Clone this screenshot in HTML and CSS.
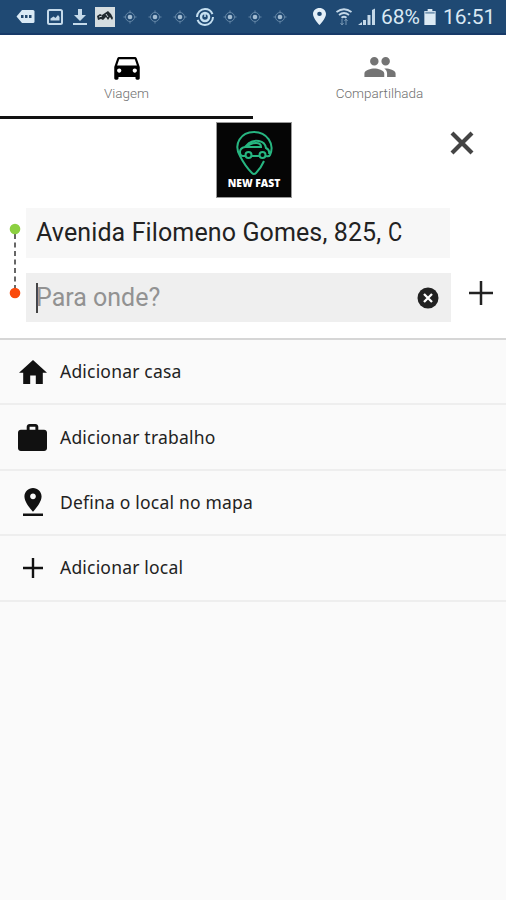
FILE: index.html
```html
<!DOCTYPE html>
<html lang="pt-BR">

<head>
    <meta charset="UTF-8">
    <meta name="viewport" content="width=device-width, initial-scale=1.0">
    <title>New Fast</title>
    <link rel="stylesheet" href="styles.css">
</head>

<body>
    <!-- icon reused by the location notifications -->
    <svg class="defs">
        <symbol id="gps" viewBox="0 0 16 16">
            <circle cx="8" cy="8" r="4.500" fill="none" stroke="#6486a6" />
            <circle cx="8" cy="8" r="2.300" fill="#a4bdd2" />
            <path d="M8 1.500v2M8 12.500v2M1.500 8h2M12.500 8h2" stroke="#6486a6" />
        </symbol>
    </svg>

    <div class="status-bar">
        <div class="notifications">
            <span class="first"><svg width="19" height="15" viewBox="0 0 19 15"><path d="M6 1h11q1.500 0 1.500 1.500v10q0 1.500-1.500 1.500H6L.5 7.500z" fill="#d9e9f5" /><path d="M5 6h2.500v3H5zM9 6h2.500v3H9zM13 6h2.500v3H13z" fill="#22486e" /></svg></span>
            <span><svg width="18" height="18" viewBox="0 0 18 18"><rect x="2" y="2" width="14" height="14" rx="1.500" fill="none" stroke="#c5daea" stroke-width="2" /><path d="M4.500 12.500v-2l3-2 2 1.500 2.500-3 1.500 2v3.500z" fill="#c5daea" /></svg></span>
            <span><svg width="16" height="18" viewBox="0 0 16 18"><path d="M6 1h4v6h4l-6 6-6-6h4zM1 15h14v2H1z" fill="#c5daea" /></svg></span>
            <span><svg width="20" height="20" viewBox="0 0 20 20"><rect width="20" height="20" fill="#d5dde0" /><path d="M2 9l3-2 2 1 3-2 3-2 3 3 2 4-1 2-2-3-2 3-2-3-3 3-2-1-3 1z" fill="#202a30" /><path d="M4 10l3-1M11 7l2 3" stroke="#cbd5da" /></svg></span>
            <span><svg width="16" height="16"><use href="#gps" /></svg></span>
            <span><svg width="16" height="16"><use href="#gps" /></svg></span>
            <span><svg width="16" height="16"><use href="#gps" /></svg></span>
            <span><svg width="20" height="20" viewBox="0 0 20 20" fill="none" stroke="#c5dff0"><circle cx="10" cy="10" r="8" stroke-width="2" stroke-dasharray="22 3" /><circle cx="10" cy="10" r="4" stroke-width="2.500" /><path d="M10 10V6" stroke-width="1.500" /></svg></span>
            <span><svg width="16" height="16"><use href="#gps" /></svg></span>
            <span><svg width="16" height="16"><use href="#gps" /></svg></span>
            <span><svg width="16" height="16"><use href="#gps" /></svg></span>
        </div>
        <div class="system">
            <svg width="13" height="17" viewBox="5 2 14 20" preserveAspectRatio="none"><path d="M12 2C8.130 2 5 5.130 5 9c0 5.250 7 13 7 13s7-7.750 7-13c0-3.870-3.130-7-7-7zm0 9.500a2.500 2.500 0 1 1 0-5 2.500 2.500 0 0 1 0 5z" fill="#e4eff8" /></svg>
            <svg class="wifi" width="18" height="18" viewBox="0 0 18 18" fill="none" stroke="#c4d8e8"><path d="M1.500 4q7.500-5.500 15 0M4 7q5-4 10 0M6.500 9.700q2.500-2 5 0" stroke-width="1.800" /><path d="M7 11v6M11 11v6M5.500 15L7 17l1.500-2M9.500 13l1.500-2 1.500 2" stroke="#7898b5" /></svg>
            <svg class="signal" width="18" height="18" viewBox="0 0 18 18" fill="#c4d8e8"><path d="M0 17l4-3v3zM5 12h3v5H5zM9.500 7h3v10h-3zM14 2l3-1.500V17h-3z" /></svg>
            <span class="percent">68%</span>
            <svg class="battery" width="12" height="16" viewBox="0 0 12 17"><path d="M3.500 0h5v2H12v15H0V2h3.500z" fill="#dceaf4" /><path d="M1 3h10v2H1z" fill="#7898b5" /></svg>
            <span class="clock">16:51</span>
        </div>
    </div>

    <div class="tabs">
        <div class="tab active">
            <svg width="34" height="34" viewBox="0 0 24 24"><path d="M18.920 6.010C18.720 5.420 18.160 5 17.500 5h-11c-.66 0-1.210.42-1.420 1.010L3 12v8c0 .55.45 1 1 1h1c.55 0 1-.45 1-1v-1h12v1c0 .55.45 1 1 1h1c.55 0 1-.45 1-1v-8l-2.080-5.990zM6.500 16c-.83 0-1.500-.67-1.500-1.500S5.670 13 6.500 13s1.500.67 1.500 1.500S7.330 16 6.500 16zm11 0c-.83 0-1.500-.67-1.500-1.500s.67-1.500 1.500-1.500 1.500.67 1.500 1.500-.67 1.500-1.500 1.500zM5 11l1.500-4.500h11L19 11H5z" /></svg>
            <span class="tab-label">Viagem</span>
        </div>
        <div class="tab">
            <svg width="34" height="34" viewBox="0 0 24 24" fill="#747474"><path d="M16 11c1.660 0 2.990-1.340 2.990-3S17.660 5 16 5s-3 1.340-3 3 1.340 3 3 3zm-8 0c1.660 0 2.990-1.340 2.990-3S9.660 5 8 5 5 6.340 5 8s1.340 3 3 3zm0 2c-2.330 0-7 1.170-7 3.500V19h14v-2.500c0-2.330-4.670-3.500-7-3.500zm8 0c-.29 0-.62.02-.97.05 1.160.84 1.970 1.970 1.970 3.450V19h6v-2.500c0-2.330-4.670-3.500-7-3.500z" /></svg>
            <span class="tab-label">Compartilhada</span>
        </div>
    </div>

    <div class="header">
        <div class="logo">
            <svg width="38" height="46" viewBox="0 0 38 46" fill="none" stroke="#27b681" stroke-width="2">
                <path d="M5 26C-2 14 6 2 19 2s21 12 16 23q-1 2-4 1M5 26q5 10 12 17 2 2 4 0 5-5 8-12" />
                <path d="M10 26H8q-3 0-3-4 0-4 5-5l4-4q4-3 10-2 6 1 7 7 4 2 3 6M17 26h7M12 17h14q0-4-5-4-6 0-9 4z" />
                <circle cx="13.500" cy="25" r="3" />
                <circle cx="27.500" cy="25" r="3" />
            </svg>
            <span>NEW FAST</span>
        </div>
        <svg class="close" width="26" height="26" viewBox="0 0 26 26"><path d="M3 3l20 20M23 3L3 23" stroke="#444" stroke-width="4.200" /></svg>
    </div>

    <div class="route">
        <svg class="track" width="12" height="76" viewBox="0 0 12 76">
            <path d="M6 11v54" stroke="#666" stroke-width="2" stroke-dasharray="5 3.500" />
            <circle cx="6" cy="6" r="5.300" fill="#8cd041" />
            <circle cx="6" cy="70" r="5.300" fill="#fa4a0c" />
        </svg>
        <div class="fields">
            <div class="field origin">Avenida Filomeno Gomes, 825, <span class="last">C</span></div>
            <div class="field destination">
                <span class="caret"></span>
                <span class="placeholder">Para onde?</span>
                <svg width="22" height="22" viewBox="0 0 22 22"><circle cx="11" cy="11" r="10.500" fill="#222" /><path d="M7 7l8 8M15 7l-8 8" stroke="#fff" stroke-width="2.300" /></svg>
            </div>
        </div>
        <svg class="add" width="24" height="24" viewBox="0 0 24 24"><path d="M12 0v24M0 12h24" stroke="#222" stroke-width="2.500" /></svg>
    </div>

    <div class="places">
        <div class="place">
            <span class="icon"><svg width="28" height="24" viewBox="2 3 20 17" preserveAspectRatio="none"><path d="M10 20v-6h4v6h5v-8h3L12 3 2 12h3v8z" fill="#111" /></svg></span>
            <span class="name">Adicionar casa</span>
        </div>
        <div class="place">
            <span class="icon"><svg width="29" height="27" viewBox="2 2 20 19" preserveAspectRatio="none"><path d="M20 6h-4V4c0-1.110-.89-2-2-2h-4c-1.110 0-2 .89-2 2v2H4c-1.110 0-1.990.89-1.990 2L2 19c0 1.110.89 2 2 2h16c1.110 0 2-.89 2-2V8c0-1.110-.89-2-2-2zm-6 0h-4V4h4v2z" fill="#111" /></svg></span>
            <span class="name">Adicionar trabalho</span>
        </div>
        <div class="place">
            <span class="icon"><svg width="20" height="28" viewBox="5 2 14 20" preserveAspectRatio="none"><path d="M18 8c0-3.310-2.690-6-6-6S6 4.690 6 8c0 4.500 6 11 6 11s6-6.500 6-11zm-8 0c0-1.100.9-2 2-2s2 .9 2 2-.89 2-2 2c-1.100 0-2-.9-2-2zM5 20.300V22h14v-1.700H5z" fill="#111" /></svg></span>
            <span class="name">Defina o local no mapa</span>
        </div>
        <div class="place">
            <span class="icon"><svg width="20" height="20" viewBox="0 0 20 20"><path d="M10 0v20M0 10h20" stroke="#111" stroke-width="2.400" /></svg></span>
            <span class="name">Adicionar local</span>
        </div>
    </div>
</body>

</html>
```
FILE: styles.css
```css
* {
    box-sizing: border-box;
}

body {
    margin: 0;
    min-height: 900px;
    background-color: #fafafa;
    font-family: Roboto, sans-serif;
}

svg {
    display: block;
    flex: none;
}

.defs {
    width: 0;
    height: 0;
    position: absolute;
}

.status-bar {
    height: 35px;
    display: flex;
    align-items: center;
    background-color: #1f4973;
    border-bottom: 2px solid #173a68;
    color: #d9e8f4;
    font-size: 21px;
}

.notifications {
    display: flex;
    width: 280px;
    margin-left: 13px;
}

.notifications span {
    flex: 1;
    display: flex;
    align-items: center;
    justify-content: center;
}

.notifications .first {
    padding-right: 4px;
}

.system {
    display: flex;
    align-items: center;
    margin-left: 20px;
}

.wifi {
    margin-left: 9px;
}

.signal {
    margin-left: 5px;
}

.percent {
    margin-left: 5px;
    width: 43px;
}

.clock {
    margin-left: 7px;
}

.tabs {
    height: 84px;
    display: flex;
    background-color: #fff;
}

.tab {
    width: 253px;
    padding-top: 15px;
    display: flex;
    flex-direction: column;
    align-items: center;
    border-bottom: 3px solid #fff;
}

.tab.active {
    border-color: #111;
}

.tab-label {
    font-family: Roboto, sans-serif;
    font-size: 13.5px;
    font-weight: 300;
    line-height: 18px;
    color: #707070;
}

.header {
    height: 89px;
    padding: 3px 31px 0 216px;
    display: flex;
    justify-content: space-between;
    background-color: #fff;
}

.logo {
    width: 76px;
    height: 76px;
    padding-top: 7px;
    display: flex;
    flex-direction: column;
    align-items: center;
    background-color: #050505;
    border: 1px solid #999;
}

.logo span {
    font: 800 10.3px/15px "Open Sans", sans-serif;
    color: #fff;
    white-space: nowrap;
}

.close {
    margin-top: 8px;
}

.route {
    height: 132px;
    display: flex;
    background-color: #fff;
    border-bottom: 2px solid #d6d6d6;
}

.track {
    margin: 15px 5px 0 9px;
}

.fields {
    width: 425px;
}

.field {
    display: flex;
    align-items: center;
    padding-left: 10px;
    font-size: 25px;
    white-space: pre;
}

.origin {
    width: 424px;
    height: 50px;
    padding-bottom: 2px;
    background-color: #f7f7f7;
    color: #222;
    letter-spacing: 0.12px;
}

.last {
    transform: scaleX(0.87);
    transform-origin: left;
}

.destination {
    height: 49px;
    margin-top: 15px;
    padding-right: 12px;
    background-color: #efefef;
    color: #929292;
}

.caret {
    width: 2px;
    height: 30px;
    margin-right: -2px;
    background-color: #444;
}

.placeholder {
    flex: 1;
}

.add {
    margin: 73px 0 0 18px;
}

.place {
    height: 65.4px;
    padding-left: 13px;
    display: flex;
    align-items: center;
    border-bottom: 2px solid #eee;
}

.icon {
    width: 39px;
    margin-right: 8px;
    display: flex;
    justify-content: center;
}

.name {
    padding-bottom: 1px;
    font-family: "Noto Sans", sans-serif;
    font-size: 17.5px;
    letter-spacing: 0.2px;
    color: #222;
}
```
